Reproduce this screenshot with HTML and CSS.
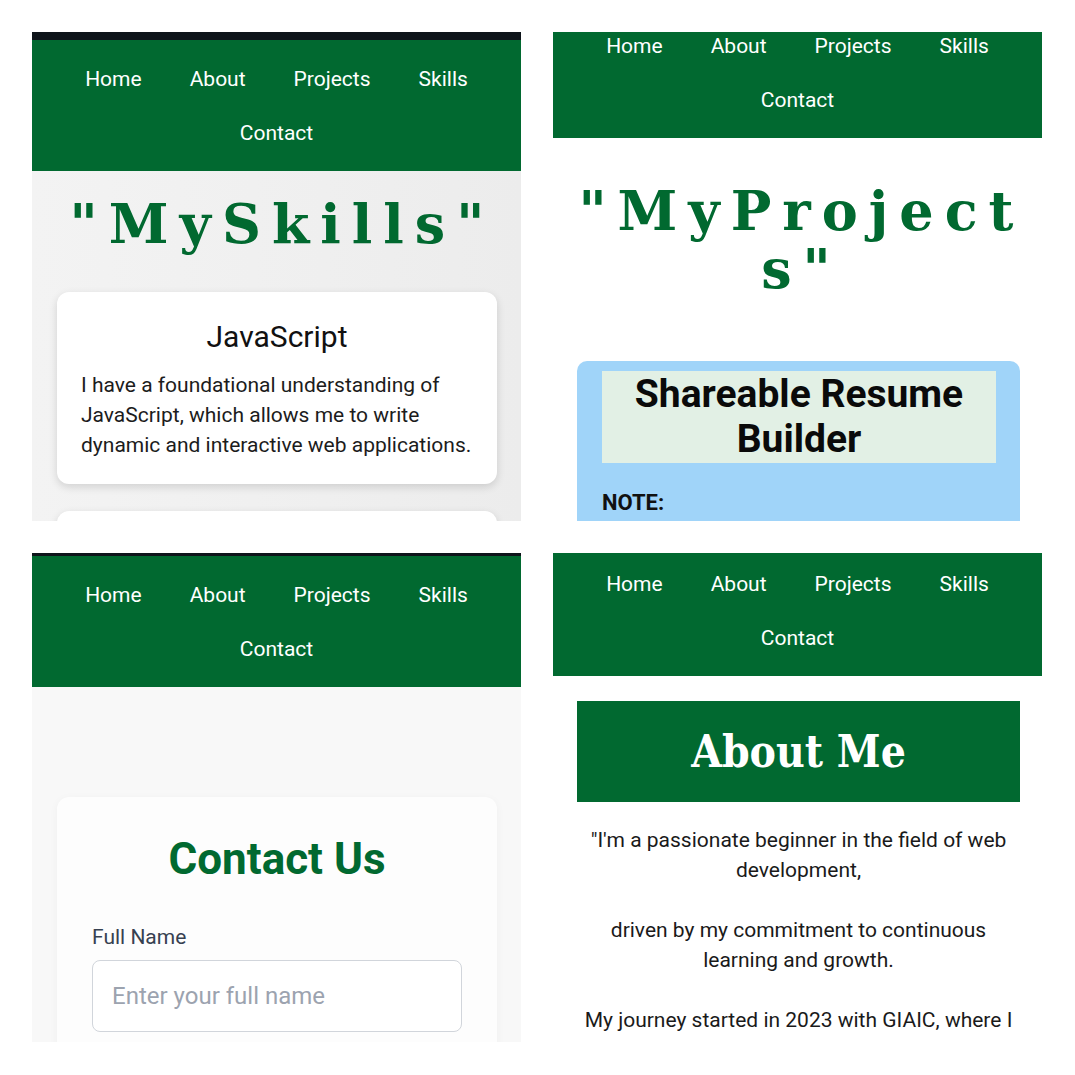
FILE: index.html
```html
<!DOCTYPE html>
<html lang="en">
<head>
<meta charset="utf-8">
<title>Portfolio screenshots</title>
<link rel="stylesheet" href="styles.css">
</head>
<body>
<main class="collage">

  <section class="phone phone--skills">
    <div class="statusbar statusbar--tall"></div>
    <nav class="nav">
      <a href="#">Home</a><a href="#">About</a><a href="#">Projects</a><a href="#">Skills</a><a href="#">Contact</a>
    </nav>
    <div class="page page--grey">
      <h1 class="display display--skills">"MySkills"</h1>
      <article class="skill-card">
        <h3 class="skill-card__title">JavaScript</h3>
        <p class="skill-card__text">I have a foundational understanding of JavaScript, which allows me to write dynamic and interactive web applications.</p>
      </article>
      <article class="skill-card skill-card--next"></article>
    </div>
  </section>

  <section class="phone phone--projects">
    <nav class="nav nav--scrolled-far">
      <a href="#">Home</a><a href="#">About</a><a href="#">Projects</a><a href="#">Skills</a><a href="#">Contact</a>
    </nav>
    <div class="page">
      <h1 class="display display--projects">"MyProjects"</h1>
      <article class="project-card">
        <div class="project-card__head">
          <h2 class="project-card__title">Shareable Resume Builder</h2>
        </div>
        <p class="project-card__note">NOTE:</p>
      </article>
    </div>
  </section>

  <section class="phone phone--contact">
    <div class="statusbar statusbar--thin"></div>
    <nav class="nav">
      <a href="#">Home</a><a href="#">About</a><a href="#">Projects</a><a href="#">Skills</a><a href="#">Contact</a>
    </nav>
    <div class="page page--soft">
      <form class="contact-card">
        <h2 class="contact-card__title">Contact Us</h2>
        <label class="field__label" for="fullname">Full Name</label>
        <input class="field__input" id="fullname" type="text" placeholder="Enter your full name">
      </form>
    </div>
  </section>

  <section class="phone phone--about">
    <nav class="nav nav--scrolled">
      <a href="#">Home</a><a href="#">About</a><a href="#">Projects</a><a href="#">Skills</a><a href="#">Contact</a>
    </nav>
    <div class="page">
      <div class="about-banner"><h2 class="about-banner__title">About Me</h2></div>
      <div class="about-text">
        <p>"I'm a passionate beginner in the field of web development,</p>
        <p>driven by my commitment to continuous learning and growth.</p>
        <p>My journey started in 2023 with GIAIC, where I</p>
      </div>
    </div>
  </section>

</main>
</body>
</html>
```

FILE: styles.css
```css
* { box-sizing: border-box; }

html, body {
  margin: 0;
  padding: 0;
  background: #ffffff;
}

body {
  font-family: Roboto, "Liberation Sans", sans-serif;
}

.collage {
  display: grid;
  grid-template-columns: 489px 489px;
  grid-template-rows: 489px 489px;
  gap: 32px;
  padding: 32px 0 0 32px;
}

.phone {
  overflow: hidden;
  background: #ffffff;
  display: flex;
  flex-direction: column;
}

.statusbar { background: #0e141a; flex: none; }
.statusbar--tall { height: 8px; }
.statusbar--thin { height: 3px; }

.nav {
  flex: none;
  background: #016930;
  display: flex;
  flex-wrap: wrap;
  justify-content: center;
  padding: 12px 0 11px;
}
.nav a {
  color: #ffffff;
  text-decoration: none;
  font-size: 21px;
  line-height: 54px;
  padding: 0 24px;
}
.nav--scrolled { margin-top: -8px; }
.nav--scrolled-far { margin-top: -25px; }

.page { flex: 1; }
.page--grey {
  background: linear-gradient(90deg, #f3f3f3 0%, #efefef 60%, #ececec 100%);
}
.page--soft { background: #f8f8f8; }

.display {
  margin: 0;
  font-family: "DejaVu Serif", "Liberation Serif", serif;
  font-weight: bold;
  color: #016930;
  font-size: 54px;
  line-height: 58px;
  letter-spacing: 11px;
  text-align: center;
  overflow-wrap: anywhere;
}
.display--skills { padding: 24px 0 0 12px; }
.display--projects { padding: 44px 16px 0 24px; }

.skill-card {
  background: #ffffff;
  margin: 39px 24px 27px 25px;
  border-radius: 12px;
  padding: 24px;
  box-shadow: 0 3px 8px rgba(0, 0, 0, 0.14);
}
.skill-card--next {
  margin-top: 0;
  height: 120px;
}
.skill-card__title {
  margin: 0;
  font-weight: normal;
  font-size: 30px;
  line-height: 42px;
  text-align: center;
  color: #111111;
}
.skill-card__text {
  margin: 12px 0 0;
  font-size: 21px;
  line-height: 30px;
  color: #1c1c1c;
}

.project-card {
  background: #a0d4f9;
  border-radius: 10px;
  margin: 63px 22px 0 24px;
  padding: 10px 24px 20px 25px;
}
.project-card__head {
  background: #e2f0e5;
  padding: 1px 0;
}
.project-card__title {
  margin: 0;
  font-size: 39px;
  line-height: 45px;
  font-weight: bold;
  text-align: center;
  color: #0a0a0a;
}
.project-card__note {
  margin: 27px 0 0;
  font-size: 22px;
  line-height: 26px;
  font-weight: bold;
  color: #111111;
}

.contact-card {
  display: flex;
  flex-direction: column;
  background: #fdfdfd;
  border-radius: 12px;
  margin: 110px 24px 0 25px;
  padding: 36px 35px 40px;
  box-shadow: 0 2px 10px rgba(0, 0, 0, 0.04);
}
.contact-card__title {
  margin: 0;
  font-size: 44px;
  line-height: 52px;
  font-weight: bold;
  text-align: center;
  color: #016930;
}
.field__label {
  margin-top: 40px;
  font-size: 21px;
  line-height: 25px;
  color: #374151;
}
.field__input {
  margin-top: 10px;
  height: 72px;
  border: 1.5px solid #d1d5db;
  border-radius: 8px;
  padding: 0 19px;
  font-family: Roboto, "Liberation Sans", sans-serif;
  font-size: 24px;
  background: #ffffff;
}
.field__input::placeholder { color: #9ca3af; }

.about-banner {
  background: #016930;
  margin: 25px 22px 0 24px;
  height: 101px;
  display: flex;
  align-items: center;
  justify-content: center;
}
.about-banner__title {
  margin: 0;
  font-family: "DejaVu Serif", "Liberation Serif", serif;
  font-stretch: condensed;
  font-weight: bold;
  font-size: 44px;
  color: #ffffff;
}

.about-text {
  margin: 23px 22px 0 24px;
  text-align: center;
  font-size: 21px;
  line-height: 30px;
  color: #1a1a1a;
}
.about-text p { margin: 0 0 30px; }
```
